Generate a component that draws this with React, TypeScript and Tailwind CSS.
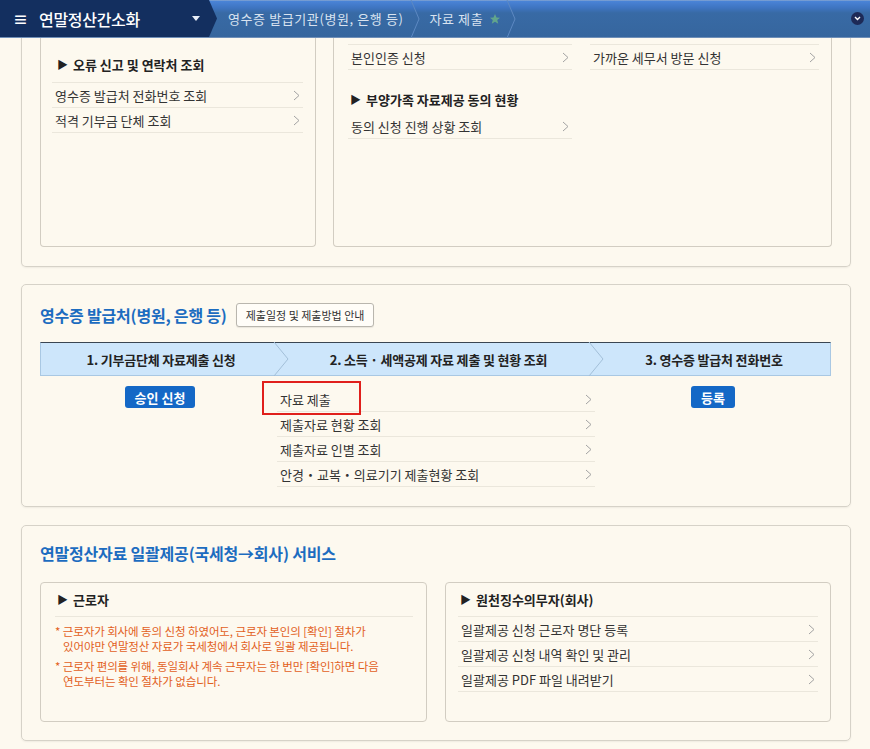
import React from "react";

const Chev = ({ className = "" }: { className?: string }) => (
  <svg width="7" height="11" viewBox="0 0 7 11" className={className}>
    <polyline points="1,1 6,5.5 1,10" fill="none" stroke="#a3a3a3" strokeWidth="1" />
  </svg>
);

const Row = ({ text, first = false }: { text: string; first?: boolean }) => (
  <div
    className={
      "flex items-center justify-between h-[25px] border-b border-[#ebe7dc] pl-[3px] pr-[3px] text-[13px] leading-none text-[#333] " +
      (first ? "border-t" : "")
    }
  >
    <span>{text}</span>
    <Chev />
  </div>
);

const Heading = ({ text }: { text: string }) => (
  <div className="flex items-center text-[13px] font-bold leading-none text-[#222]">
    <span className="text-[11px] mr-[5px]">▶</span>
    <span>{text}</span>
  </div>
);

function Header() {
  return (
    <div className="relative h-[38px] flex items-stretch bg-[linear-gradient(180deg,#9fb3cc_0px,#4a84d8_1px,#3e74c0_8px,#386aa5_13px,#36669e_100%)] border-b border-[#6f8fb8]">
      <div className="w-[217px] shrink-0 bg-[#132f5f] [clip-path:polygon(0_0,209px_0,217px_50%,209px_100%,0_100%)] flex items-center">
        <span className="ml-[13px] text-white text-[15px] leading-none font-bold">≡</span>
        <span className="ml-[11px] text-white text-[16px] leading-none font-medium tracking-[-0.3px]">연말정산간소화</span>
        <svg width="8" height="5" viewBox="0 0 8 5" className="ml-[52px]">
          <polygon points="0,0 8,0 4,5" fill="#e8eef8" />
        </svg>
      </div>
      <div className="flex items-center ml-[11px] text-[13px] leading-none text-[#d9e3f0] tracking-[0.6px]">
        영수증 발급기관(병원, 은행 등)
      </div>
      <svg width="12" height="38" viewBox="0 0 12 38" className="ml-[6px]">
        <polyline points="2,0 10,19 2,38" fill="none" stroke="#5d89c2" strokeWidth="1" />
      </svg>
      <div className="flex items-center ml-[8px] text-[13px] leading-none text-[#d9e3f0] tracking-[0.6px]">
        자료 제출
        <svg width="12" height="12" viewBox="0 0 24 24" className="ml-[6px]">
          <polygon
            points="12,2 15,9 22,9.5 16.5,14 18.5,21.5 12,17.5 5.5,21.5 7.5,14 2,9.5 9,9"
            fill="#62a58c"
          />
        </svg>
      </div>
      <svg width="12" height="38" viewBox="0 0 12 38" className="ml-[4px]">
        <polyline points="2,0 10,19 2,38" fill="none" stroke="#5d89c2" strokeWidth="1" />
      </svg>
      <div className="flex-1" />
      <div className="flex items-center mr-[6px]">
        <div className="w-[13px] h-[13px] rounded-full bg-[#1d2a57] flex items-center justify-center">
          <svg width="7" height="5" viewBox="0 0 7 5">
            <polyline points="1,1 3.5,3.5 6,1" fill="none" stroke="#ffffff" strokeWidth="1.4" />
          </svg>
        </div>
      </div>
    </div>
  );
}

export default function App() {
  return (
    <div className="min-h-[749px] w-[870px] bg-[#fdf9ef] font-['Noto_Sans_CJK_KR',sans-serif] overflow-hidden">
      <Header />

      {/* Card 1 (scrolled, top cut) */}
      <div className="ml-[21px] w-[830px] border-x border-b border-[#d6d2c8] rounded-b-[5px] shadow-[0_1px_2px_rgba(0,0,0,0.06)] flex gap-[17px] pl-[18px] pr-[18px] pb-[19px]">
        <div className="w-[276px] h-[209px] border-x border-b border-[#d2cdc2] rounded-b-[4px] pl-[11px] pr-[12px] pt-[14px]">
          <div className="h-[24px] flex items-center pl-[5px]">
            <Heading text="오류 신고 및 연락처 조회" />
          </div>
          <div className="mt-[6px] border-t border-[#ebe7dc]">
            <Row text="영수증 발급처 전화번호 조회" />
            <Row text="적격 기부금 단체 조회" />
          </div>
        </div>
        <div className="w-[499px] h-[209px] border-x border-b border-[#d2cdc2] rounded-b-[4px] pl-[14px] pr-[12px] pt-[6px] flex gap-[18px]">
          <div className="w-[224px]">
            <div className="border-t border-[#ebe7dc]">
              <Row text="본인인증 신청" />
            </div>
            <div className="h-[30px] mt-[14px] flex items-center pl-[2px]">
              <Heading text="부양가족 자료제공 동의 현황" />
            </div>
            <Row text="동의 신청 진행 상황 조회" />
          </div>
          <div className="w-[229px]">
            <div className="border-t border-[#ebe7dc]">
              <Row text="가까운 세무서 방문 신청" />
            </div>
          </div>
        </div>
      </div>

      {/* Card 2 */}
      <div className="ml-[21px] mt-[17px] w-[830px] border border-[#d6d2c8] rounded-[5px] shadow-[0_1px_2px_rgba(0,0,0,0.06)] pl-[18px] pr-[19px] pt-[17px] pb-[19px]">
        <div className="h-[26px] flex items-center gap-[9px]">
          <span className="text-[16px] font-bold leading-none text-[#1c6cc0] tracking-[-0.2px]">영수증 발급처(병원, 은행 등)</span>
          <span className="h-[24px] px-[9px] flex items-center border border-[#b9b6ae] rounded-[3px] bg-[#fffdf8] text-[11px] leading-none text-[#333] shadow-[0_1px_1px_rgba(0,0,0,0.08)]">
            제출일정 및 제출방법 안내
          </span>
        </div>

        <div className="mt-[14px] h-[34px] grid grid-cols-[240px_315px_236px] bg-[#cde6fb] border-t border-t-[#3a4652] border-x border-x-[#a9c8e3] border-b border-b-[#a9c8e3] text-[13px] font-bold leading-none text-[#222] tracking-[-0.2px]">
          <div className="relative flex items-center justify-center">
            1. 기부금단체 자료제출 신청
            <svg width="16" height="34" viewBox="0 0 16 34" className="absolute left-[232px] top-[-1px]">
              <polyline points="1,0 15,17 1,34" fill="none" stroke="#a2bfd8" strokeWidth="1" />
            </svg>
          </div>
          <div className="relative flex items-center justify-center">
            2. 소득 · 세액공제 자료 제출 및 현황 조회
            <svg width="16" height="34" viewBox="0 0 16 34" className="absolute left-[307px] top-[-1px]">
              <polyline points="1,0 15,17 1,34" fill="none" stroke="#a2bfd8" strokeWidth="1" />
            </svg>
          </div>
          <div className="flex items-center justify-center">3. 영수증 발급처 전화번호</div>
        </div>

        <div className="mt-[10px] grid grid-cols-[240px_315px_236px]">
          <div className="flex justify-center">
            <span className="h-[22px] px-[10px] flex items-center rounded-[3px] bg-[#1468c6] text-white text-[13px] font-bold leading-none">
              승인 신청
            </span>
          </div>
          <div className="pt-[1px] -ml-[3px]">
            <div className="relative">
              <div className="absolute left-[-15px] top-[-6px] w-[99px] h-[34px] border-2 border-[#e0201c]" />
              <Row text="자료 제출" />
            </div>
            <Row text="제출자료 현황 조회" />
            <Row text="제출자료 인별 조회" />
            <Row text="안경・교복・의료기기 제출현황 조회" />
          </div>
          <div className="flex justify-center">
            <span className="h-[22px] px-[10px] flex items-center rounded-[3px] bg-[#1468c6] text-white text-[13px] font-bold leading-none">
              등록
            </span>
          </div>
        </div>
      </div>

      {/* Card 3 */}
      <div className="ml-[21px] mt-[18px] w-[830px] border border-[#d6d2c8] rounded-[5px] shadow-[0_1px_2px_rgba(0,0,0,0.06)] pl-[18px] pr-[19px] pt-[14px] pb-[18px]">
        <div className="h-[26px] flex items-center">
          <span className="text-[16px] font-bold leading-none text-[#1c6cc0] tracking-[-0.2px]">
            연말정산자료 일괄제공(국세청→회사) 서비스
          </span>
        </div>
        <div className="mt-[16px] flex gap-[18px]">
          <div className="w-[387px] h-[140px] border border-[#d2cdc2] rounded-[4px] pl-[14px] pr-[13px]">
            <div className="h-[33px] flex items-center pl-[2px]">
              <Heading text="근로자" />
            </div>
            <div className="border-t border-[#ebe7dc] pt-[7px] text-[11.5px] leading-[15px] text-[#e2601c] tracking-[-0.1px]">
              <p>* 근로자가 회사에 동의 신청 하였어도, 근로자 본인의 [확인] 절차가</p>
              <p className="pl-[8px]">있어야만 연말정산 자료가 국세청에서 회사로 일괄 제공됩니다.</p>
              <p className="mt-[5px]">* 근로자 편의를 위해, 동일회사 계속 근무자는 한 번만 [확인]하면 다음</p>
              <p className="pl-[8px]">연도부터는 확인 절차가 없습니다.</p>
            </div>
          </div>
          <div className="w-[386px] h-[140px] border border-[#d2cdc2] rounded-[4px] pl-[12px] pr-[12px]">
            <div className="h-[33px] flex items-center pl-[2px]">
              <Heading text="원천징수의무자(회사)" />
            </div>
            <div className="border-t border-[#ebe7dc]">
              <Row text="일괄제공 신청 근로자 명단 등록" />
              <Row text="일괄제공 신청 내역 확인 및 관리" />
              <Row text="일괄제공 PDF 파일 내려받기" />
            </div>
          </div>
        </div>
      </div>
    </div>
  );
}
